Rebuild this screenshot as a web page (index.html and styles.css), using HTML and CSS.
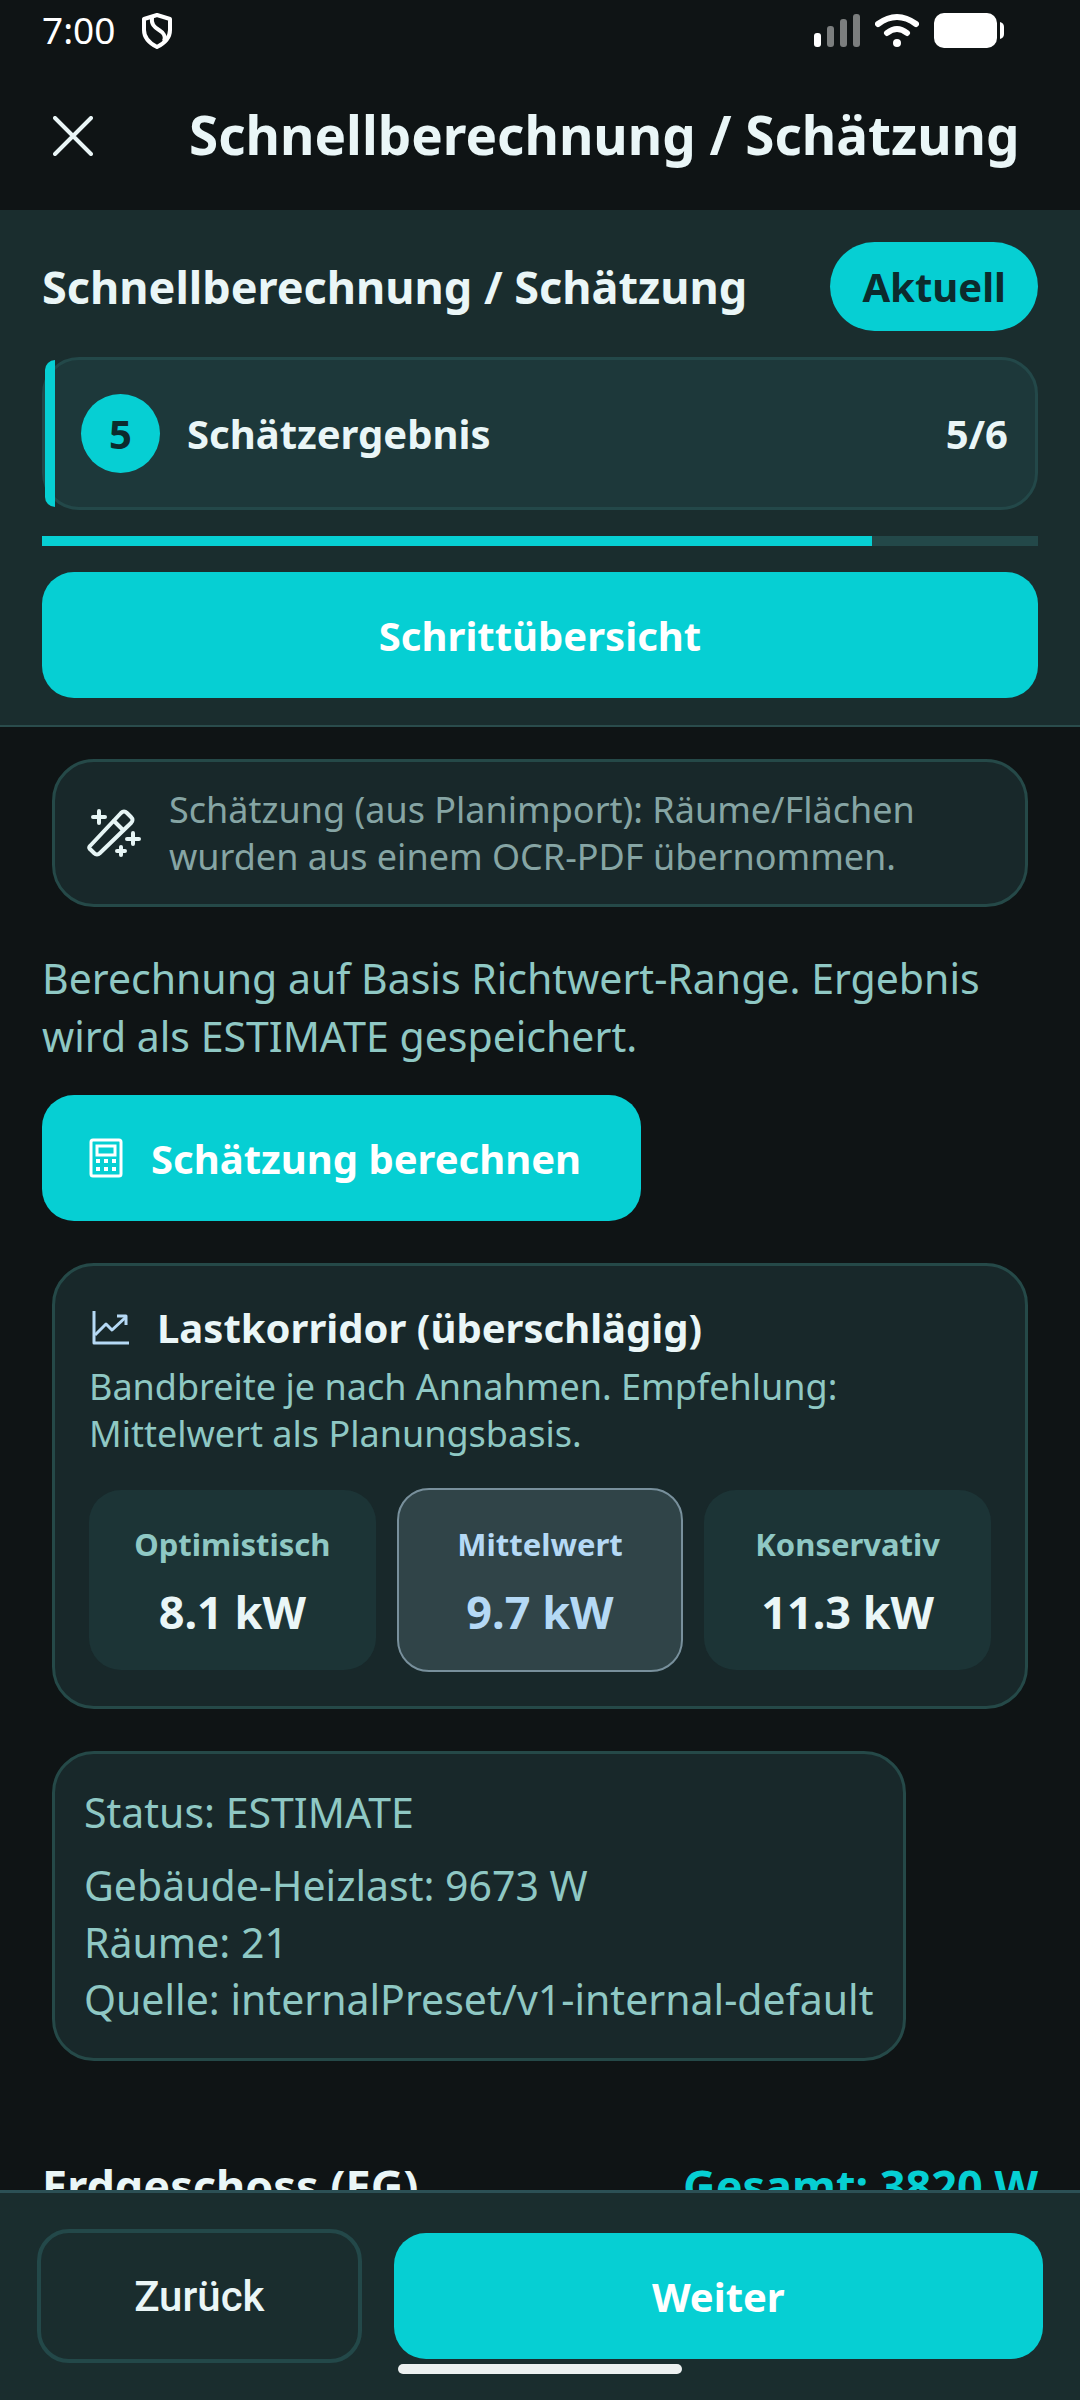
FILE: index.html
```html
<!DOCTYPE html>
<html lang="de">
<head>
    <meta charset="UTF-8">
    <meta name="viewport" content="width=device-width, initial-scale=1.0">
    <title>Schnellberechnung / Schätzung</title>
    <link rel="stylesheet" href="styles.css">
</head>
<body>
    <div class="status-bar">
        <span class="clock">7:00</span>
        <svg class="shield" width="32" height="38" viewBox="0 0 32 38" fill="none" stroke="#fff" stroke-width="4" stroke-linejoin="round">
            <path d="M16 3 L29 7 V18 C29 26 24 31 16 35 C8 31 3 26 3 18 V7 Z"/>
            <path d="M11 5 C10 12 13 15 18 18 C23 21 25 24 23 29"/>
        </svg>
        <div class="status-icons">
            <svg width="46" height="36" viewBox="0 0 46 36">
                <rect x="0" y="20" width="7" height="14" rx="3" fill="#fff"/>
                <rect x="13" y="13" width="7" height="21" rx="3" fill="#7b7e7e"/>
                <rect x="26" y="6" width="7" height="28" rx="3" fill="#7b7e7e"/>
                <rect x="39" y="1" width="7" height="33" rx="3" fill="#7b7e7e"/>
            </svg>
            <svg width="44" height="36" viewBox="0 0 44 36" fill="none" stroke="#fff" stroke-width="6" stroke-linecap="round">
                <path d="M3 11 Q22 -3 41 11"/>
                <path d="M12 20 Q22 12 32 20"/>
                <circle cx="22" cy="30" r="4" fill="#fff" stroke="none"/>
            </svg>
            <svg width="70" height="36" viewBox="0 0 70 36" fill="#fff">
                <rect x="0" y="0" width="63" height="35" rx="10"/>
                <path d="M66 9 Q70 10 70 14 V21 Q70 25 66 26 Z"/>
            </svg>
        </div>
    </div>

    <header class="app-bar">
        <button class="close-btn" aria-label="Schließen">
            <svg width="40" height="40" viewBox="0 0 40 40" stroke="#eaf6f7" stroke-width="4" stroke-linecap="round">
                <path d="M2 2 L38 38 M38 2 L2 38"/>
            </svg>
        </button>
        <h1>Schnellberechnung / Schätzung</h1>
    </header>

    <section class="stepper">
        <div class="stepper-head">
            <h2>Schnellberechnung / Schätzung</h2>
            <span class="pill">Aktuell</span>
        </div>
        <div class="step-card">
            <span class="step-number">5</span>
            <span class="step-name">Schätzergebnis</span>
            <span>5/6</span>
        </div>
        <progress value="5" max="6" aria-label="Fortschritt"></progress>
        <button class="btn">Schrittübersicht</button>
    </section>

    <main class="content">
        <div class="card info">
            <svg width="54" height="48" viewBox="0 0 54 48" fill="none" stroke="#e6f5f5" stroke-width="4" stroke-linecap="round" stroke-linejoin="round">
                <path d="M3 37 L34 4 Q37 1 40 4 L44 8 Q47 11 44 14 L13 44 Q10 47 7 44 L4 41 Q1 39 3 37 Z"/>
                <path d="M27 12 L36 21"/>
                <path d="M12 2 V14 M6 8 H18 M46 24 V35 M40 30 H52 M34 38 V46 M30 42 H38"/>
            </svg>
            <p>Schätzung (aus Planimport): Räume/Flächen wurden aus einem OCR-PDF übernommen.</p>
        </div>

        <p class="intro">Berechnung auf Basis Richtwert-Range. Ergebnis wird als ESTIMATE gespeichert.</p>

        <button class="btn calc-btn">
            <svg width="34" height="40" viewBox="0 0 34 40" fill="none" stroke="#fff" stroke-width="3">
                <rect x="2" y="2" width="30" height="36" rx="2"/>
                <rect x="8" y="8" width="18" height="9"/>
                <path d="M9 21 V25 M17 21 V25 M25 21 V25 M9 29 V33 M17 29 V33 M25 29 V33" stroke-width="4"/>
            </svg>
            Schätzung berechnen
        </button>

        <section class="card corridor">
            <h3>
                <svg width="40" height="36" viewBox="0 0 40 36" fill="none" stroke="#b5d9f5" stroke-width="3" stroke-linejoin="round">
                    <path d="M5 1 V33 H40"/>
                    <path d="M6 25 L17 14 L23 20 L37 7"/>
                    <path d="M28 6 H37 V15"/>
                </svg>
                Lastkorridor (überschlägig)
            </h3>
            <p>Bandbreite je nach Annahmen. Empfehlung: Mittelwert als Planungsbasis.</p>
            <div class="tiles">
                <div class="tile">
                    <div class="label">Optimistisch</div>
                    <div class="value">8.1 kW</div>
                </div>
                <div class="tile selected">
                    <div class="label">Mittelwert</div>
                    <div class="value">9.7 kW</div>
                </div>
                <div class="tile">
                    <div class="label">Konservativ</div>
                    <div class="value">11.3 kW</div>
                </div>
            </div>
        </section>

        <div class="card result">
            <p>Status: ESTIMATE</p>
            <p>Gebäude-Heizlast: 9673 W<br>Räume: 21<br>Quelle: internalPreset/v1-internal-default</p>
        </div>

        <div class="floor">
            <h2>Erdgeschoss (EG)</h2>
            <span class="floor-total">Gesamt: 3820 W</span>
        </div>
    </main>

    <footer class="bottom-bar">
        <button class="btn-outline">Zurück</button>
        <button class="btn">Weiter</button>
        <div class="home-indicator"></div>
    </footer>
</body>
</html>
```
FILE: styles.css
```css
* { box-sizing: border-box; }
body { margin: 0; height: 100vh; display: flex; flex-direction: column; overflow: hidden; background: #0f1415; color: #eaf6f7; font-family: "Noto Sans", sans-serif; font-size: 40px; line-height: 57px; }
h1, h2, h3, p { margin: 0; }
h1, h2, h3 { font-weight: 700; }
button { font-family: inherit; cursor: pointer; }
svg { display: block; flex: none; }

.status-bar { display: flex; align-items: center; height: 62px; padding: 0 76px 0 42px; color: #fff; }
.clock { padding-bottom: 4px; font-size: 37px; }
.shield { margin-left: 26px; }
.status-icons { display: flex; align-items: center; gap: 15px; margin-left: auto; }

.app-bar { display: flex; align-items: center; height: 148px; padding: 0 53px; }
.app-bar h1 { margin-left: 96px; padding-bottom: 2px; font-size: 53px; line-height: 72px; white-space: nowrap; }
.close-btn { padding: 0; border: none; background: none; }

.stepper { display: flex; flex-direction: column; gap: 26px; padding: 32px 42px 27px; background: #1a2d2e; border-bottom: 2px solid #2a4c4c; }
.stepper-head { display: flex; justify-content: space-between; align-items: center; }
.stepper-head h2, .floor h2 { font-size: 45px; }
.pill { padding: 16px 32px; border-radius: 45px; background: #06cfd3; color: #0c2b2d; font-weight: 700; }
.step-card { position: relative; display: flex; align-items: center; gap: 27px; height: 153px; padding: 0 27px 0 36px; border: 3px solid #234849; border-radius: 37px; background: #1d383a; font-weight: 700; }
.step-card::before { content: ""; position: absolute; left: 0; top: 0; bottom: 0; width: 10px; border-radius: 10px 0 0 10px; background: #06cfd3; }
.step-number { width: 79px; height: 79px; border-radius: 50%; background: #06cfd3; color: #0c2b2d; line-height: 79px; text-align: center; }
.step-name { flex: 1; }
progress { display: block; width: 100%; height: 10px; border: none; appearance: none; background: #234849; }
progress::-webkit-progress-bar { background: #234849; }
progress::-webkit-progress-value { background: #06cfd3; }

.btn { display: flex; align-items: center; justify-content: center; height: 126px; padding: 0 48px; border: none; border-radius: 32px; background: #06cfd3; color: #fff; font-size: 40px; font-weight: 700; }
.btn-outline { height: 134px; border: 4px solid #234849; border-radius: 32px; background: none; color: #eaf6f7; font-family: Roboto, sans-serif; font-size: 42px; font-weight: 500; }

.content { flex: 1; min-height: 0; overflow: hidden; padding: 32px 42px 0; }
.card { margin: 0 10px 42px; border: 3px solid #254948; border-radius: 42px; background: #18282a; }
.info { display: flex; align-items: center; gap: 28px; padding: 24px 32px; color: #86a5a4; font-size: 36px; line-height: 47px; }
.intro { margin-bottom: 30px; color: #8fc8c4; font-size: 41px; line-height: 58px; }
.calc-btn { gap: 28px; margin-bottom: 42px; padding: 0 60px 0 47px; }

.corridor { padding: 34px; }
.corridor h3 { display: flex; align-items: center; gap: 28px; font-size: 40px; line-height: 55px; }
.corridor p { margin: 8px 0 31px; color: #8fc8c4; font-size: 36px; line-height: 47px; }
.tiles { display: grid; grid-template-columns: repeat(3, 1fr); gap: 21px; align-items: center; }
.tile { padding: 34px 8px 28px; border-radius: 32px; background: #1c3436; text-align: center; font-weight: 700; }
.tile .label { margin-bottom: 18px; color: #8fc8c4; font-size: 31px; line-height: 40px; }
.tile .value { font-size: 45px; line-height: 60px; }
.tile.selected { border: 2px solid #78909c; background: #304448; }
.tile.selected .label, .tile.selected .value { color: #b5d9f5; }

.result { width: fit-content; padding: 30px 29px; color: #8fc8c4; font-size: 41px; }
.result p + p { margin-top: 16px; }
.floor { display: flex; justify-content: space-between; align-items: center; margin-top: 96px; }
.floor-total { color: #06cfd3; font-size: 45px; font-weight: 700; }

.bottom-bar { position: relative; display: grid; grid-template-columns: 1fr 2fr; align-items: center; gap: 32px; padding: 36px 37px 37px; border-top: 3px solid #2c5055; background: #1a2d2e; }
.home-indicator { position: absolute; left: 50%; bottom: 26px; width: 284px; height: 10px; margin-left: -142px; border-radius: 5px; background: #ecf0f0; }
```
